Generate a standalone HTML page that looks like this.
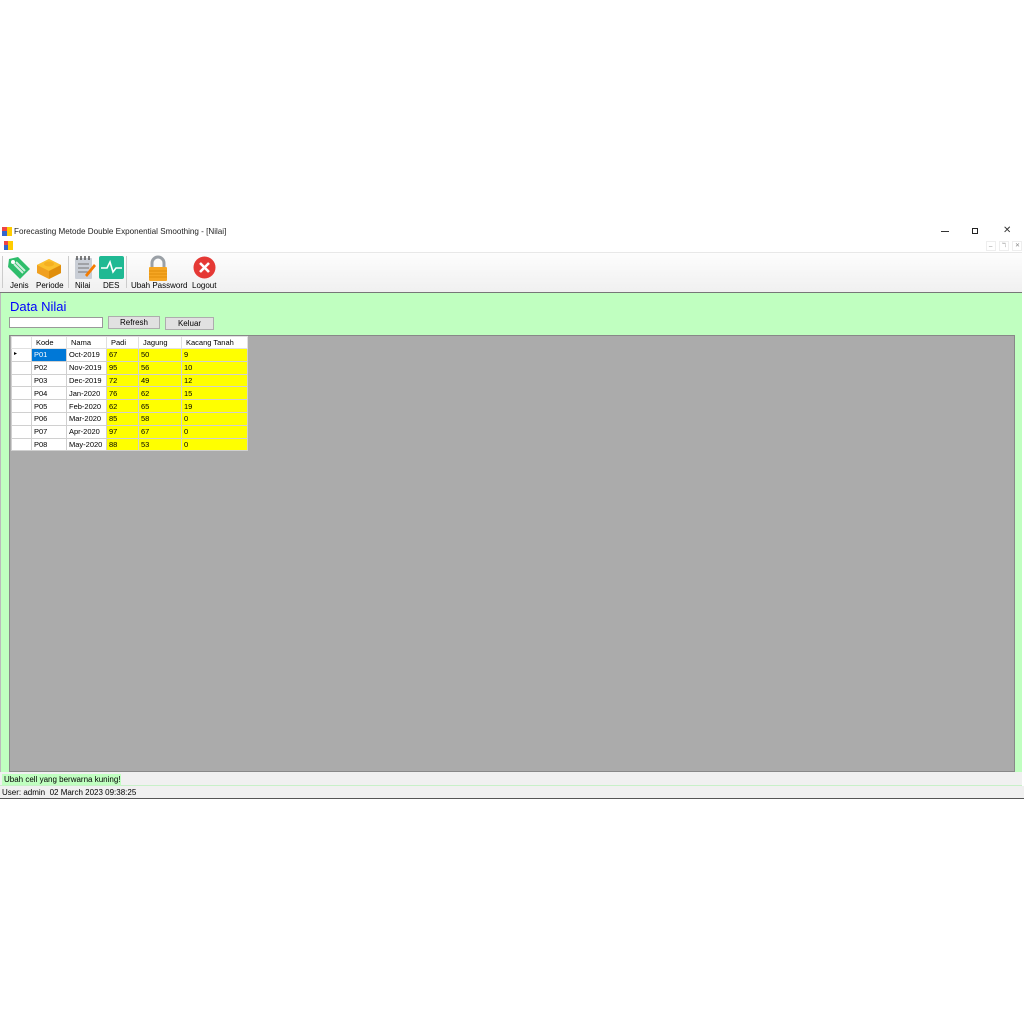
<!DOCTYPE html>
<html><head><meta charset="utf-8"><style>
*{margin:0;padding:0;box-sizing:border-box}
body{width:1024px;height:1024px;background:#fff;position:relative;font-family:"Liberation Sans",sans-serif;font-size:8px;color:#000;overflow:hidden}
.a{position:absolute}
.t{font-size:8px;white-space:nowrap}
table{border-collapse:collapse;position:absolute;left:11px;top:336px}
td{height:12.8px;border:1px solid #d0d0d0;padding:0 2px;font-size:7.5px;white-space:nowrap;line-height:11px}
tr.h td{background:#fff;height:12px;border-color:#e0e0e0;padding-left:4px}
td.y{background:#ffff00}
td.w{background:#fff}
</style></head><body>
<div class="a" style="left:0;top:224px;width:1024px;height:16px;background:#fff"></div>
<svg class="a" style="left:2px;top:227px" width="10" height="9"><rect x="0" y="0" width="5" height="4" fill="#e44"/><rect x="5" y="0" width="5" height="4" fill="#fc0"/><rect x="0" y="4" width="5" height="5" fill="#36c"/><rect x="5" y="4" width="5" height="5" fill="#fc0"/></svg>
<div class="a t" style="left:14px;top:227px;color:#222;font-size:8.1px">Forecasting Metode Double Exponential Smoothing - [Nilai]</div>
<div class="a" style="left:941px;top:231px;width:8px;height:1px;background:#333"></div>
<div class="a" style="left:972px;top:228px;width:6px;height:6px;border:1px solid #222"></div>
<div class="a t" style="left:1003px;top:225px;font-size:10px;color:#333">✕</div>
<svg class="a" style="left:4px;top:241px" width="9" height="9"><rect x="0" y="0" width="4" height="4" fill="#e44"/><rect x="4" y="0" width="5" height="4" fill="#fc0"/><rect x="0" y="4" width="4" height="5" fill="#36c"/><rect x="4" y="4" width="5" height="5" fill="#fc0"/></svg>
<div class="a" style="left:986px;top:241px;width:10px;height:10px;border:1px solid #eee"></div>
<div class="a" style="left:999px;top:241px;width:10px;height:10px;border:1px solid #eee"></div>
<div class="a" style="left:1012px;top:241px;width:10px;height:10px;border:1px solid #eee"></div>
<div class="a t" style="left:989px;top:241px;font-size:6px;color:#888">_</div>
<div class="a t" style="left:1002px;top:242px;font-size:6px;color:#888">ℸ</div>
<div class="a t" style="left:1015px;top:242px;font-size:6px;color:#888">✕</div>
<div class="a" style="left:0;top:252px;width:1022px;height:41px;background:linear-gradient(#fdfdfd,#f0f0f0);border-top:1px solid #e8e8e8;border-bottom:1px solid #777"></div>
<div class="a" style="left:2px;top:256px;width:1px;height:32px;background:#ccc"></div>
<div class="a" style="left:68px;top:256px;width:1px;height:32px;background:#ccc"></div>
<div class="a" style="left:126px;top:256px;width:1px;height:32px;background:#ccc"></div>
<svg class="a" style="left:6px;top:255px" width="26" height="26"><path d="M3 4 L12 2 L24 14 L14 24 L2 12 Z" fill="#2ebd6b"/><path d="M8 9 L17 18 M10 7 L19 16" stroke="#cfeedd" stroke-width="2"/><circle cx="7" cy="7" r="2" fill="#fff"/></svg>
<div class="a t" style="left:10px;top:281px">Jenis</div>
<svg class="a" style="left:35px;top:255px" width="28" height="26"><path d="M2 10 L14 4 L26 10 L26 18 L14 24 L2 18 Z" fill="#f0a020"/><path d="M2 10 L14 16 L26 10 L14 4 Z" fill="#fbc02d"/><path d="M14 16 L14 24 L26 18 L26 10Z" fill="#e08e0b"/><ellipse cx="14" cy="9" rx="5" ry="2.5" fill="#f5b020"/></svg>
<div class="a t" style="left:36px;top:281px">Periode</div>
<svg class="a" style="left:73px;top:255px" width="24" height="26"><rect x="2" y="3" width="17" height="21" rx="1" fill="#c9ced6"/><path d="M5 9h11M5 13h11M5 17h11" stroke="#777" stroke-width="1"/><path d="M4 1v4M8 1v4M12 1v4M16 1v4" stroke="#555" stroke-width="1.5"/><path d="M12 20 L21 9 L23 11 L14 22 Z" fill="#f57c00"/></svg>
<div class="a t" style="left:75px;top:281px">Nilai</div>
<svg class="a" style="left:99px;top:256px" width="25" height="24"><rect x="0" y="0" width="25" height="23" rx="2" fill="#1fb993"/><path d="M2 12h6l3-6 3 10 3-4h6" stroke="#fff" stroke-width="1.6" fill="none"/></svg>
<div class="a t" style="left:103px;top:281px">DES</div>
<svg class="a" style="left:146px;top:255px" width="24" height="27"><path d="M6 12V8a6 6 0 0 1 12 0v4" stroke="#9aa0a6" stroke-width="3" fill="none"/><rect x="3" y="12" width="18" height="14" rx="1" fill="#f6a623"/><path d="M3 16h18M3 19h18M3 22h18" stroke="#e08e0b" stroke-width="1"/></svg>
<div class="a t" style="left:131px;top:281px">Ubah Password</div>
<svg class="a" style="left:193px;top:256px" width="23" height="23"><circle cx="11.5" cy="11.5" r="11" fill="#e53935"/><path d="M7 7l9 9M16 7l-9 9" stroke="#fff" stroke-width="2.6"/></svg>
<div class="a t" style="left:192px;top:281px">Logout</div>
<div class="a" style="left:0;top:293px;width:1022px;height:479px;background:#c0ffc0;border-left:1px solid #bbb"></div>
<div class="a" style="left:10px;top:299px;font-size:13px;color:#0000ff">Data Nilai</div>
<div class="a" style="left:9px;top:317px;width:94px;height:11px;background:#fff;border:1px solid #999"></div>
<div class="a t" style="left:108px;top:316px;width:52px;height:13px;background:#e1e1e1;border:1px solid #adadad;text-align:center;line-height:11px">Refresh</div>
<div class="a t" style="left:165px;top:317px;width:49px;height:13px;background:#e1e1e1;border:1px solid #adadad;text-align:center;line-height:11px">Keluar</div>
<div class="a" style="left:9px;top:335px;width:1006px;height:437px;background:#ababab;border:1px solid #888"></div>
<table>
<tr class="h"><td style="width:20px"></td><td style="width:35px">Kode</td><td style="width:40px">Nama</td><td style="width:32px">Padi</td><td style="width:43px">Jagung</td><td style="width:66px">Kacang Tanah</td></tr>
<tr><td class="w" style="font-size:6px">▸</td><td style="background:#0078d7;color:#fff">P01</td><td class="w">Oct-2019</td><td class="y">67</td><td class="y">50</td><td class="y">9</td></tr>
<tr><td class="w"></td><td class="w">P02</td><td class="w">Nov-2019</td><td class="y">95</td><td class="y">56</td><td class="y">10</td></tr>
<tr><td class="w"></td><td class="w">P03</td><td class="w">Dec-2019</td><td class="y">72</td><td class="y">49</td><td class="y">12</td></tr>
<tr><td class="w"></td><td class="w">P04</td><td class="w">Jan-2020</td><td class="y">76</td><td class="y">62</td><td class="y">15</td></tr>
<tr><td class="w"></td><td class="w">P05</td><td class="w">Feb-2020</td><td class="y">62</td><td class="y">65</td><td class="y">19</td></tr>
<tr><td class="w"></td><td class="w">P06</td><td class="w">Mar-2020</td><td class="y">85</td><td class="y">58</td><td class="y">0</td></tr>
<tr><td class="w"></td><td class="w">P07</td><td class="w">Apr-2020</td><td class="y">97</td><td class="y">67</td><td class="y">0</td></tr>
<tr><td class="w"></td><td class="w">P08</td><td class="w">May-2020</td><td class="y">88</td><td class="y">53</td><td class="y">0</td></tr>
</table>
<div class="a" style="left:0;top:772px;width:1022px;height:14px;background:#f0f0f0;border-bottom:1px solid #c8f0c8"></div>
<div class="a t" style="left:2px;top:774px;width:119px;height:11px;background:#c0ffc0;padding-left:2px;line-height:11px">Ubah cell yang berwarna kuning!</div>
<div class="a" style="left:0;top:786px;width:1024px;height:13px;background:#f0f0f0;border-bottom:1px solid #555"></div>
<div class="a t" style="left:2px;top:788px">User: admin&nbsp; 02 March 2023 09:38:25</div>
</body></html>
